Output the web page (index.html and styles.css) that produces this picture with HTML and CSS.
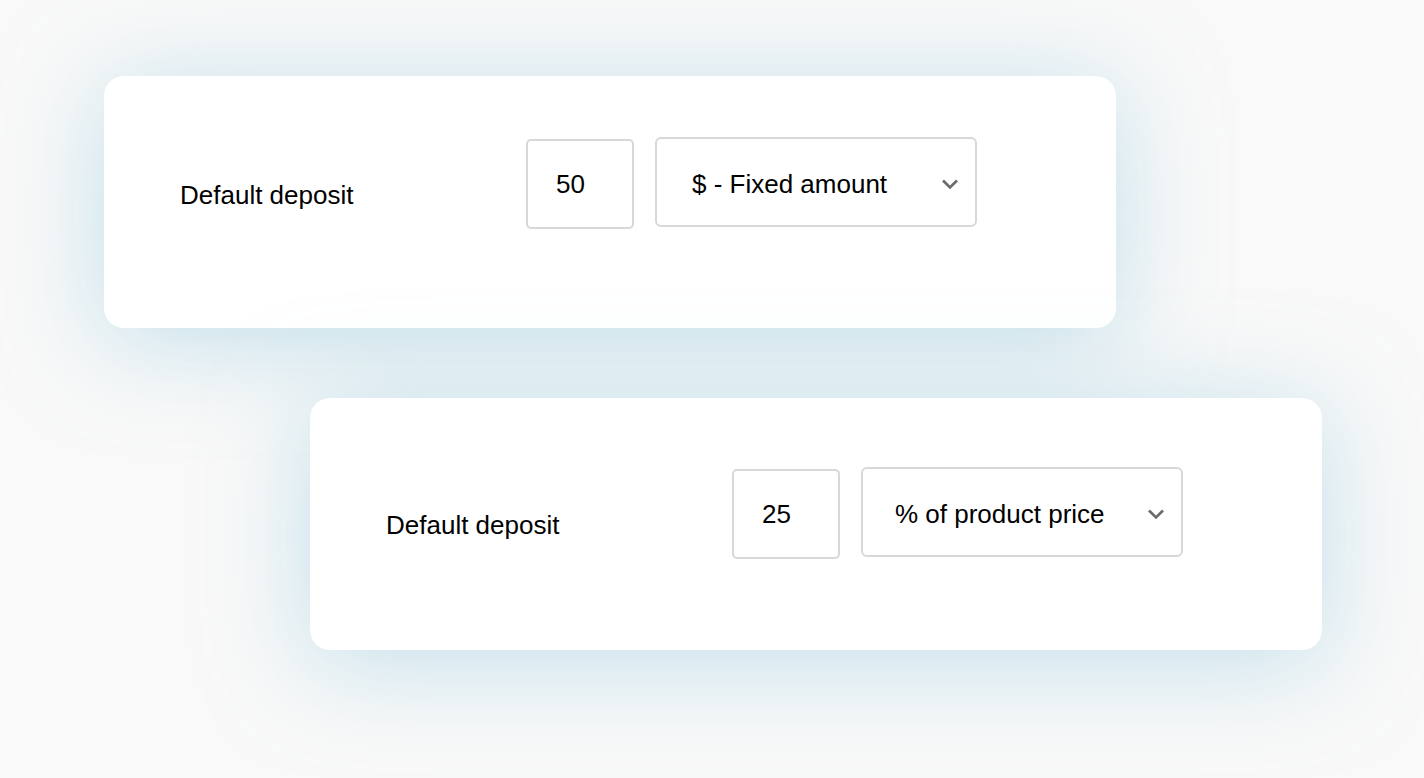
FILE: index.html
```html
<!DOCTYPE html>
<html>
<head>
<meta charset="utf-8">
<link rel="stylesheet" href="styles.css">
</head>
<body>
<main class="stage">
  <section class="card card-first">
    <div class="row">
      <div class="label">Default deposit</div>
      <div class="amount">50</div>
      <div class="select">
        <span class="select-text">$ - Fixed amount</span>
        <svg class="chev" width="18" height="12" viewBox="0 0 18 12"><polyline points="2,2.5 9,9.5 16,2.5" fill="none" stroke="#6b6b6b" stroke-width="2.6"/></svg>
      </div>
    </div>
  </section>
  <section class="card card-second">
    <div class="row">
      <div class="label">Default deposit</div>
      <div class="amount">25</div>
      <div class="select select-pct">
        <span class="select-text">% of product price</span>
        <svg class="chev" width="18" height="12" viewBox="0 0 18 12"><polyline points="2,2.5 9,9.5 16,2.5" fill="none" stroke="#6b6b6b" stroke-width="2.6"/></svg>
      </div>
    </div>
  </section>
</main>
</body>
</html>
```

FILE: styles.css
```css
html, body {
  margin: 0;
  padding: 0;
  background: #f9f9f9;
  height: 100%;
  overflow: hidden;
}
.stage {
  display: flex;
  flex-direction: column;
  align-items: flex-start;
  padding-top: 76px;
  font-family: "Liberation Sans", Arial, sans-serif;
  color: #000;
}
.card {
  box-sizing: border-box;
  width: 1012px;
  height: 252px;
  background: #fff;
  border-radius: 20px;
  box-shadow: 0 12px 100px rgba(140, 200, 222, 0.5);
  padding-left: 76px;
}
.card-first {
  margin-left: 104px;
  padding-top: 61px;
}
.card-second {
  margin-left: 310px;
  margin-top: 70px;
  padding-top: 69px;
}
.row {
  display: flex;
  align-items: flex-start;
}
.label {
  width: 346px;
  font-size: 26px;
  line-height: 30px;
  margin-top: 43px;
}
.amount {
  box-sizing: border-box;
  width: 108px;
  height: 90px;
  margin-top: 2px;
  border: 2px solid #d8d8d8;
  border-radius: 5px;
  padding-left: 28px;
  font-size: 26px;
  display: flex;
  align-items: center;
}
.select {
  box-sizing: border-box;
  width: 322px;
  height: 90px;
  margin-left: 21px;
  border: 2px solid #d8d8d8;
  border-radius: 6px;
  padding-left: 35px;
  padding-right: 16px;
  font-size: 26px;
  display: flex;
  align-items: center;
  justify-content: space-between;
}
.select-text {
  padding-top: 5px;
}
.select-pct {
  padding-left: 32px;
}
.chev {
  display: block;
  margin-top: 3px;
}
```
